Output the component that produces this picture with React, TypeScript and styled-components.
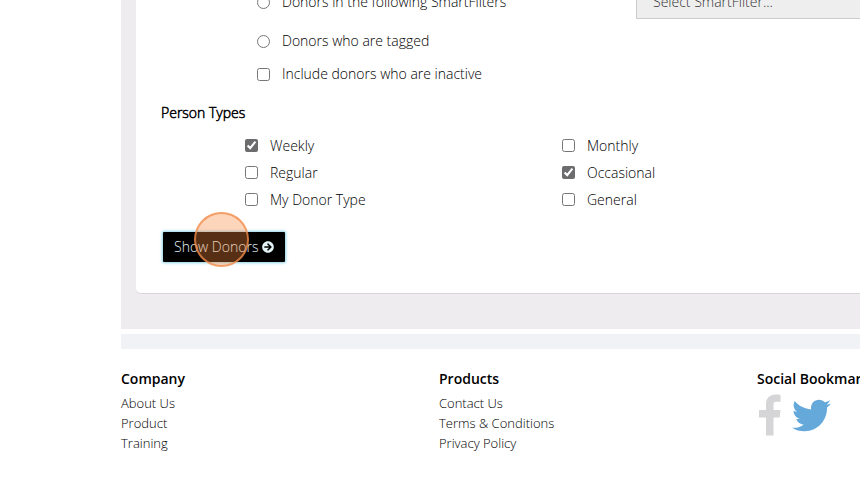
import React from "react";
import styled, { createGlobalStyle } from "styled-components";
import { FaArrowCircleRight, FaTwitter } from "react-icons/fa";

const GlobalStyle = createGlobalStyle`
  * { box-sizing: border-box; }
  body {
    margin: 0;
    overflow: hidden;
    background: #fff;
    color: #000;
    font: 300 14px/20px "Open Sans", sans-serif;
  }
`;

const Page = styled.div`
  padding-left: 121px;
  overflow: hidden;
`;

const Main = styled.main`
  padding: 0 0 35px 15px;
  background: #eeecee;
`;

const Card = styled.form`
  padding: 0 0 31px 25px;
  background: #fff;
  border-bottom: 1px solid #d8d6d8;
  border-radius: 0 0 0 5px;
`;

const FilterRow = styled.div<{ $height: number }>`
  display: grid;
  grid-template-columns: 379px 1fr;
  align-items: center;
  height: ${(p) => p.$height}px;
  padding-left: 96px;
`;

const Filters = styled.div`
  margin-top: -17px;
`;

const Option = styled.label`
  display: flex;
  align-items: center;
  gap: 12px;
`;

const Tick = styled.input`
  width: 13px;
  height: 13px;
  margin: 0;
  accent-color: #6c6b6d;
`;

const FilterSelect = styled.select`
  height: 34px;
  margin-right: -1px;
  padding: 0 16px;
  appearance: none;
  background: #eee;
  border: 1px solid #ccc;
  border-radius: 0;
  color: #333;
  font: inherit;
`;

const TypeGroup = styled.fieldset`
  margin: 0;
  padding: 16px 0 0;
  border: 0;
`;

const GroupTitle = styled.legend`
  float: left;
  width: 100%;
  margin-bottom: 9px;
  padding: 0;
  -webkit-text-stroke: 0.5px currentColor;
`;

const TypeGrid = styled.div`
  clear: both;
  display: grid;
  grid-template-columns: 317px 1fr;
  grid-auto-rows: 27px;
  padding-left: 84px;
`;

const Actions = styled.div`
  position: relative;
  display: flex;
  margin: 19px 0 0 2px;
`;

const ShowButton = styled.button`
  display: flex;
  align-items: center;
  gap: 4px;
  height: 30px;
  padding: 0 11px;
  background: #000;
  border: 0;
  border-radius: 1px;
  box-shadow: 0 0 3px 1px #8fd3ea;
  color: #e4f4f8;
  font: inherit;
`;

const ClickMarker = styled.span`
  position: absolute;
  top: -20px;
  left: 31px;
  width: 55px;
  height: 55px;
  border: 2px solid rgba(240, 140, 75, 0.75);
  border-radius: 50%;
  background: rgba(250, 135, 60, 0.35);
  pointer-events: none;
`;

const Band = styled.div`
  height: 15px;
  margin-top: 5px;
  background: #f1f2f5;
`;

const Footer = styled.footer`
  display: grid;
  grid-template-columns: 318px 318px 1fr;
  padding: 20px 0 30px;
`;

const FooterTitle = styled.h2`
  margin: 0 0 4px;
  font-size: 14px;
  line-height: 20px;
  font-weight: 600;
  white-space: nowrap;
`;

const LinkList = styled.ul`
  margin: 0;
  padding: 0;
  list-style: none;
`;

const FooterLink = styled.a`
  color: #000;
  font-size: 13px;
  text-decoration: none;
`;

const Social = styled.div`
  display: flex;
  align-items: center;
  gap: 10px;
  padding: 1px 0 0 1px;
`;

const SocialLink = styled.a<{ $color: string }>`
  display: flex;
  flex-shrink: 0;
  color: ${(p) => p.$color};
`;

const personTypes = [
  { name: "Weekly", on: true },
  { name: "Monthly", on: false },
  { name: "Regular", on: false },
  { name: "Occasional", on: true },
  { name: "My Donor Type", on: false },
  { name: "General", on: false },
];

const footerColumns = [
  { title: "Company", links: ["About Us", "Product", "Training"] },
  { title: "Products", links: ["Contact Us", "Terms & Conditions", "Privacy Policy"] },
];

const FacebookIcon = () => (
  <svg width="24" height="42" viewBox="0 0 24 42" aria-hidden="true">
    <path
      fill="currentColor"
      d="M22.500 1v6.800h-4c-2.600 0-3 1.200-3 3.200V16h7l-.8 7.500h-6.200V41.500H8V23.500H1V16h7v-5.500C8 4 12 .6 17.500 .6c2 0 4 .1 5 .4z"
    />
  </svg>
);

export default function App() {
  return (
    <>
      <GlobalStyle />
      <Page>
        <Main>
          <Card onSubmit={(e) => e.preventDefault()}>
            <Filters>
              <FilterRow $height={38}>
                <Option>
                  <Tick type="radio" name="scope" />
                  Donors in the following SmartFilters
                </Option>
                <FilterSelect aria-label="SmartFilter">
                  <option>Select SmartFilter...</option>
                </FilterSelect>
              </FilterRow>
              <FilterRow $height={40}>
                <Option>
                  <Tick type="radio" name="scope" />
                  Donors who are tagged
                </Option>
              </FilterRow>
              <FilterRow $height={26}>
                <Option>
                  <Tick type="checkbox" />
                  Include donors who are inactive
                </Option>
              </FilterRow>
            </Filters>
            <TypeGroup>
              <GroupTitle>Person Types</GroupTitle>
              <TypeGrid>
                {personTypes.map((t) => (
                  <Option key={t.name}>
                    <Tick type="checkbox" defaultChecked={t.on} />
                    {t.name}
                  </Option>
                ))}
              </TypeGrid>
            </TypeGroup>
            <Actions>
              <ShowButton type="submit">
                Show Donors
                <FaArrowCircleRight size={12} />
              </ShowButton>
              <ClickMarker />
            </Actions>
          </Card>
        </Main>
        <Band />
        <Footer>
          {footerColumns.map((c) => (
            <section key={c.title}>
              <FooterTitle>{c.title}</FooterTitle>
              <LinkList>
                {c.links.map((l) => (
                  <li key={l}>
                    <FooterLink href="#">{l}</FooterLink>
                  </li>
                ))}
              </LinkList>
            </section>
          ))}
          <section>
            <FooterTitle>Social Bookmarks</FooterTitle>
            <Social>
              <SocialLink href="#" aria-label="Facebook" $color="#d5d4d6">
                <FacebookIcon />
              </SocialLink>
              <SocialLink href="#" aria-label="Twitter" $color="#65a9db">
                <FaTwitter size={39} />
              </SocialLink>
            </Social>
          </section>
        </Footer>
      </Page>
    </>
  );
}
